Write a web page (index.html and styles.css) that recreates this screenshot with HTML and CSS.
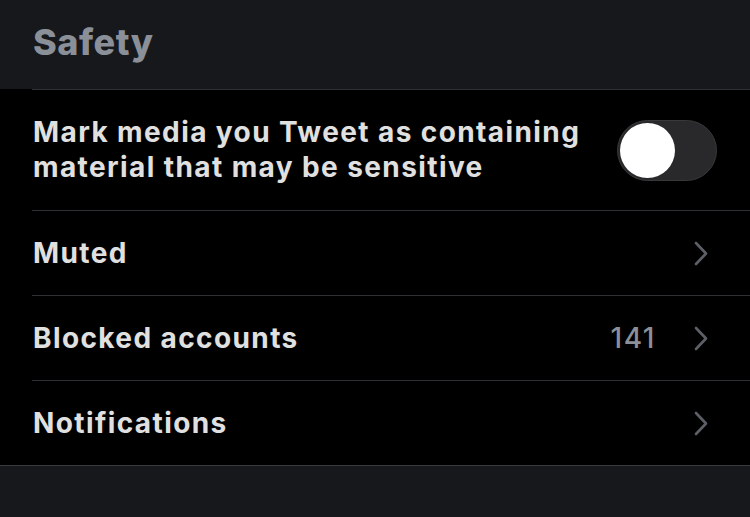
FILE: index.html
```html
<!DOCTYPE html>
<html lang="en">
<head>
  <meta charset="UTF-8">
  <meta name="viewport" content="width=device-width, initial-scale=1.0">
  <title>Safety</title>
  <link rel="stylesheet" href="styles.css">
</head>
<body>
  <header class="section-head">
    <h1>Safety</h1>
  </header>

  <ul class="settings">
    <!-- Sensitive media toggle -->
    <li class="row row-tall">
      <span class="label">Mark media you Tweet as containing material that may be sensitive</span>
      <span class="toggle"><span class="knob"></span></span>
    </li>
    <li class="row">
      <span class="label">Muted</span>
      <svg class="chevron" width="14" height="25" viewBox="0 0 14 25"><path d="M2 2 L12 12.5 L2 23" fill="none" stroke="currentColor" stroke-width="2.6" stroke-linecap="round" stroke-linejoin="round"/></svg>
    </li>
    <li class="row">
      <span class="label">Blocked accounts</span>
      <span class="count">141</span>
      <svg class="chevron" width="14" height="25" viewBox="0 0 14 25"><path d="M2 2 L12 12.5 L2 23" fill="none" stroke="currentColor" stroke-width="2.6" stroke-linecap="round" stroke-linejoin="round"/></svg>
    </li>
    <li class="row">
      <span class="label">Notifications</span>
      <svg class="chevron" width="14" height="25" viewBox="0 0 14 25"><path d="M2 2 L12 12.5 L2 23" fill="none" stroke="currentColor" stroke-width="2.6" stroke-linecap="round" stroke-linejoin="round"/></svg>
    </li>
  </ul>

  <div class="footer-space"></div>
</body>
</html>
```

FILE: styles.css
```css
body {
  margin: 0;
  background: #16181c;
  font-family: Inter, "Noto Sans", sans-serif;
  color: #e0e0e0;
}
.section-head {
  height: 89px;
  box-sizing: border-box;
  padding: 20px 33px 0;
}
.section-head h1 {
  margin: 0;
  font-size: 36px;
  line-height: 44px;
  font-weight: 800;
  letter-spacing: 0.5px;
  color: #8a8f98;
}
.settings {
  list-style: none;
  margin: 0;
  padding: 0 0 0 32px;
  background: #000;
  border-bottom: 1px solid #3a3b3e;
}
.row {
  display: flex;
  align-items: center;
  height: 85px;
  box-sizing: border-box;
  border-top: 1px solid #2f3033;
  padding: 0 42px 0 1px;
}
.row-tall {
  height: 121px;
  padding-right: 33px;
}
.label {
  flex: 1;
  font-size: 28px;
  line-height: 35px;
  font-weight: 700;
  letter-spacing: 1.4px;
  color: #e0e0e0;
}
.row-tall .label {
  flex: none;
  max-width: 565px;
}
.count {
  font-size: 28px;
  font-weight: 500;
  letter-spacing: 1.5px;
  color: #8a8f98;
  margin-right: 38px;
}
.chevron {
  color: #5c6066;
  display: block;
}
.toggle {
  margin-left: auto;
  width: 100px;
  height: 61px;
  box-sizing: border-box;
  border-radius: 31px;
  background: #29292c;
  border: 1px solid #38383b;
  display: flex;
  align-items: center;
  padding-left: 2px;
}
.knob {
  width: 55px;
  height: 55px;
  border-radius: 50%;
  background: #fff;
}
.footer-space {
  height: 60px;
}
```
